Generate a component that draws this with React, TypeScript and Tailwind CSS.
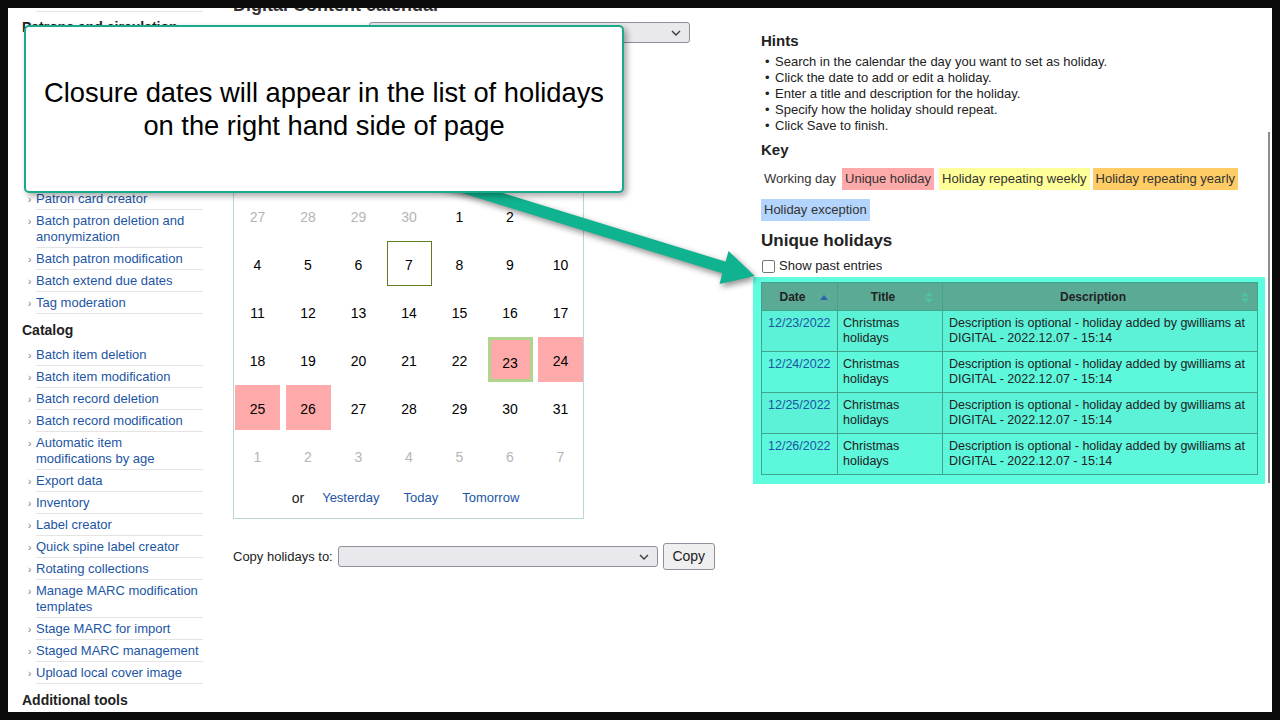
import React from "react";

function SideItem({ children }: { children: React.ReactNode }) {
  return (
    <li className="flex">
      <span className="w-[14px] shrink-0 pl-[6px] pt-[4px] text-[10px] leading-[16px] text-[#777]">›</span>
      <span className="w-[167px] whitespace-nowrap border-b border-[#e4e4e4] pt-[3px] pb-[2px] text-[13px] leading-[16px] text-[#1c55a4]">
        {children}
      </span>
    </li>
  );
}

function SideHeading({ children, first }: { children: React.ReactNode; first?: boolean }) {
  return (
    <h5
      className={
        first
          ? "mt-[7px] mb-[5px] text-[14px] leading-[16px] font-bold text-[#222]"
          : "mt-[8px] mb-[6px] text-[14px] leading-[16px] font-bold text-[#222]"
      }
    >
      {children}
    </h5>
  );
}

function Chevron() {
  return (
    <svg width="10" height="6" viewBox="0 0 10 6">
      <path d="M1 1 L5 5 L9 1" fill="none" stroke="#3b3b3b" strokeWidth="1.4" />
    </svg>
  );
}

type Cell = { d: number; other?: boolean; hol?: boolean; sel?: boolean; today?: boolean };

const weeks: Cell[][] = [
  [{ d: 27, other: true }, { d: 28, other: true }, { d: 29, other: true }, { d: 30, other: true }, { d: 1 }, { d: 2 }, { d: 3 }],
  [{ d: 4 }, { d: 5 }, { d: 6 }, { d: 7, today: true }, { d: 8 }, { d: 9 }, { d: 10 }],
  [{ d: 11 }, { d: 12 }, { d: 13 }, { d: 14 }, { d: 15 }, { d: 16 }, { d: 17 }],
  [{ d: 18 }, { d: 19 }, { d: 20 }, { d: 21 }, { d: 22 }, { d: 23, hol: true, sel: true }, { d: 24, hol: true }],
  [{ d: 25, hol: true }, { d: 26, hol: true }, { d: 27 }, { d: 28 }, { d: 29 }, { d: 30 }, { d: 31 }],
  [{ d: 1, other: true }, { d: 2, other: true }, { d: 3, other: true }, { d: 4, other: true }, { d: 5, other: true }, { d: 6, other: true }, { d: 7, other: true }],
];

function cellClass(c: Cell) {
  if (c.sel) return "h-[45px] flex items-center justify-center pt-[7px] text-[14px] text-black bg-[#ffaaaa] border-[3px] border-[#b1d58f]";
  if (c.hol) return "h-[45px] flex items-center justify-center pt-[3px] text-[14px] text-black bg-[#ffaaaa]";
  if (c.today) return "h-[45px] flex items-center justify-center pt-[3px] text-[14px] text-black border border-[#5e7d20]";
  if (c.other) return "h-[45px] flex items-center justify-center pt-[3px] text-[14px] text-[#b5b5b5]";
  return "h-[45px] flex items-center justify-center pt-[3px] text-[14px] text-black";
}

const hints = [
  "Search in the calendar the day you want to set as holiday.",
  "Click the date to add or edit a holiday.",
  "Enter a title and description for the holiday.",
  "Specify how the holiday should repeat.",
  "Click Save to finish.",
];

const rows = ["12/23/2022", "12/24/2022", "12/25/2022", "12/26/2022"];

function SortBoth() {
  return (
    <svg width="8" height="11" viewBox="0 0 8 11">
      <path d="M4 0 L8 4.5 L0 4.5 Z" fill="#4fc4a3" />
      <path d="M4 11 L8 6.5 L0 6.5 Z" fill="#4fc4a3" />
    </svg>
  );
}

export default function App() {
  return (
    <div className="w-[1280px] h-[720px] bg-[#0b0b0b] p-[8px] [font-family:'Liberation_Sans',Arial,sans-serif]">
      <div className="relative w-[1264px] h-[704px] overflow-hidden bg-white">
        <div className="flex items-start">
          {/* Sidebar */}
          <div className="w-[225px] shrink-0 pl-[14px] -mt-[18px]">
            <ul>
              <SideItem>Upload patron images</SideItem>
            </ul>
            <SideHeading first>Patrons and circulation</SideHeading>
            {/* entries hidden beneath the callout */}
            <div className="h-[148px]" />
            <ul>
              <SideItem>Patron card creator</SideItem>
              <SideItem>
                Batch patron deletion and
                <br />
                anonymization
              </SideItem>
              <SideItem>Batch patron modification</SideItem>
              <SideItem>Batch extend due dates</SideItem>
              <SideItem>Tag moderation</SideItem>
            </ul>
            <SideHeading>Catalog</SideHeading>
            <ul>
              <SideItem>Batch item deletion</SideItem>
              <SideItem>Batch item modification</SideItem>
              <SideItem>Batch record deletion</SideItem>
              <SideItem>Batch record modification</SideItem>
              <SideItem>
                Automatic item
                <br />
                modifications by age
              </SideItem>
              <SideItem>Export data</SideItem>
              <SideItem>Inventory</SideItem>
              <SideItem>Label creator</SideItem>
              <SideItem>Quick spine label creator</SideItem>
              <SideItem>Rotating collections</SideItem>
              <SideItem>
                Manage MARC modification
                <br />
                templates
              </SideItem>
              <SideItem>Stage MARC for import</SideItem>
              <SideItem>Staged MARC management</SideItem>
              <SideItem>Upload local cover image</SideItem>
            </ul>
            <SideHeading>Additional tools</SideHeading>
          </div>

          {/* Main column */}
          <div className="w-[528px] shrink-0 -mt-[14px]">
            <h1 className="text-[18px] leading-[22px] font-bold text-[#333]">Digital Content calendar</h1>
            <div className="mt-[6px] flex h-[21px] items-center">
              <span className="w-[136px]" />
              <div className="flex h-[21px] w-[321px] items-center justify-end rounded-[3px] border border-[#8f8f9d] bg-[#e9e9ed] pr-[8px]">
                <Chevron />
              </div>
            </div>

            <div className="mt-[17px] w-[351px] border border-[#b9d7d6] pl-[1px] pt-[1px] pb-[12px]">
              <div className="h-[131px]" />
              <div className="grid grid-cols-[repeat(7,45px)] gap-x-[5.5px] gap-y-[3px]">
                {weeks.flat().map((c, i) => (
                  <div key={i} className={cellClass(c)}>
                    {c.d}
                  </div>
                ))}
              </div>
              <div className="mt-[12px] flex h-[16px] items-center justify-center pr-[7px] text-[13px] leading-[16px]">
                <span className="mr-[18px] text-[14px] text-[#222]">or</span>
                <div className="flex gap-[24px] text-[#1c55a4]">
                  <span>Yesterday</span>
                  <span>Today</span>
                  <span>Tomorrow</span>
                </div>
              </div>
            </div>

            <div className="mt-[24px] flex h-[27px] items-center gap-[5px]">
              <span className="text-[13px] text-[#222]">Copy holidays to:</span>
              <div className="flex h-[21px] w-[320px] items-center justify-end rounded-[3px] border border-[#8f8f9d] bg-[#e9e9ed] pr-[8px]">
                <Chevron />
              </div>
              <div className="flex h-[27px] w-[52px] items-center justify-center rounded-[3px] border border-[#8f8f9d] bg-[#efefef] text-[14px] text-[#222]">
                Copy
              </div>
            </div>
          </div>

          {/* Right column */}
          <div className="w-[511px] shrink-0 pt-[24px] text-[13px] text-[#222]">
            <h3 className="text-[15px] leading-[18px] font-bold">Hints</h3>
            <ul className="mt-[4px]">
              {hints.map((h) => (
                <li key={h} className="flex leading-[16px]">
                  <span className="w-[14px] shrink-0 pl-[4px]">•</span>
                  <span>{h}</span>
                </li>
              ))}
            </ul>
            <h3 className="mt-[7px] text-[15px] leading-[18px] font-bold">Key</h3>
            <div className="mt-[9px] flex flex-wrap gap-x-[3px] gap-y-[9px] text-[13px] leading-[22px] text-[#333]">
              <span className="px-[3px]">Working day</span>
              <span className="bg-[#ffaaaa] px-[3px]">Unique holiday</span>
              <span className="ml-[2px] bg-[#ffff99] px-[3px]">Holiday repeating weekly</span>
              <span className="bg-[#ffcc66] px-[3px]">Holiday repeating yearly</span>
              <span className="bg-[#b3d4fd] px-[3px]">Holiday exception</span>
            </div>
            <h3 className="mt-[10px] text-[17px] leading-[20px] font-bold">Unique holidays</h3>
            <div className="mt-[7px] flex h-[16px] items-center">
              <span className="ml-[1px] h-[13px] w-[13px] rounded-[2px] border border-[#767676] bg-white" />
              <span className="ml-[4px] leading-[16px]">Show past entries</span>
            </div>
            <div className="mt-[3px] -ml-[8px] w-[512px] bg-[#5efde0] pt-[5px] pb-[9px] pl-[8px] pr-[7px]">
              <table className="w-[497px] border-collapse text-[12.5px] text-[#222]">
                <thead>
                  <tr className="h-[28px] bg-[#5baa96]">
                    <th className="relative w-[76px] border border-[#3fa58b] pl-[6px] pr-[20px] text-center text-[12px] font-bold">
                      Date
                      <svg className="absolute right-[9px] top-[12px]" width="8" height="5" viewBox="0 0 8 5">
                        <path d="M4 0 L8 5 L0 5 Z" fill="#2f63ad" />
                      </svg>
                    </th>
                    <th className="relative w-[105px] border border-[#3fa58b] pl-[6px] pr-[20px] text-center text-[12px] font-bold">
                      Title
                      <span className="absolute right-[9px] top-[9px] flex">
                        <SortBoth />
                      </span>
                    </th>
                    <th className="relative border border-[#3fa58b] pl-[6px] pr-[20px] text-center text-[12px] font-bold">
                      Description
                      <span className="absolute right-[8px] top-[9px] flex">
                        <SortBoth />
                      </span>
                    </th>
                  </tr>
                </thead>
                <tbody>
                  {rows.map((d, i) => (
                    <tr key={d} className={i % 2 === 0 ? "bg-[#5cf2d8]" : "bg-[#5df7dc]"}>
                      <td className="border border-[#3fa58b] px-[6px] pt-[5px] pb-[5px] align-top leading-[15px] text-[#1c55a4]">
                        {d}
                      </td>
                      <td className="border border-[#3fa58b] px-[5px] pt-[5px] pb-[5px] align-top leading-[15px]">
                        Christmas
                        <br />
                        holidays
                      </td>
                      <td className="border border-[#3fa58b] px-[6px] pt-[5px] pb-[5px] align-top leading-[15px] whitespace-nowrap">
                        Description is optional - holiday added by gwilliams at
                        <br />
                        DIGITAL - 2022.12.07 - 15:14
                      </td>
                    </tr>
                  ))}
                </tbody>
              </table>
            </div>
          </div>
        </div>

        {/* overlay scrollbar thumb */}
        <div className="absolute left-[1260px] top-[124px] h-[351px] w-[2px] bg-[#8c8c8c]" />

        {/* Arrow annotation */}
        <svg
          className="pointer-events-none absolute left-0 top-0 [filter:drop-shadow(2px_3px_3px_rgba(0,0,0,0.45))]"
          width="1264"
          height="704"
          viewBox="0 0 1264 704"
        >
          <line x1="432" y1="172" x2="717" y2="259.8" stroke="#0fb38f" strokeWidth="12" />
          <path d="M720.5 243.1 L746.8 267.9 L711.5 275.9 Z" fill="#0fb38f" />
        </svg>

        {/* Callout */}
        <div className="absolute left-[16px] top-[17px] flex h-[168px] w-[600px] items-center justify-center rounded-[5px] border-2 border-[#19a98b] bg-white text-center text-[27.3px] leading-[33px] text-black shadow-[3px_3px_6px_rgba(0,0,0,0.35)]">
          <p>
            Closure dates will appear in the list of holidays
            <br />
            on the right hand side of page
          </p>
        </div>
      </div>
    </div>
  );
}
